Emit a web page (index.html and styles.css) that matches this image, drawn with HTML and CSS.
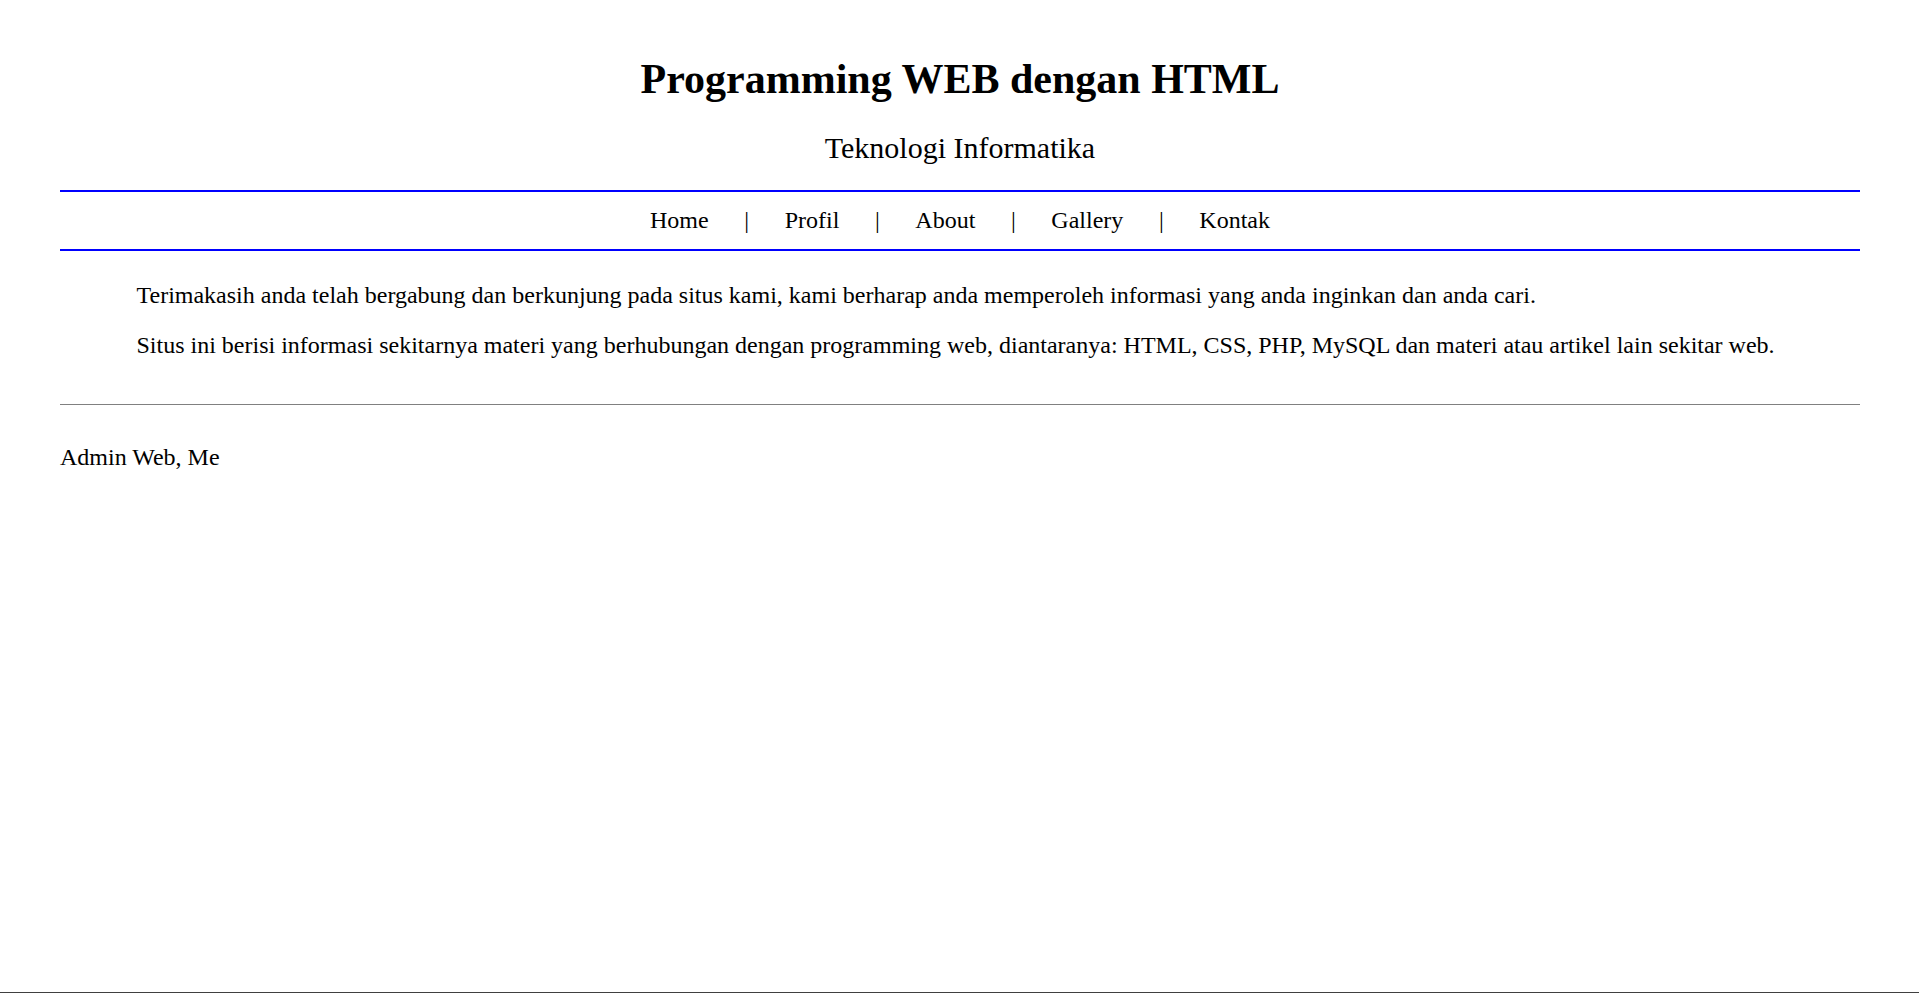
FILE: index.html
```html
<!DOCTYPE html>
<html lang="id">
<head>
<meta charset="utf-8">
<title>Programming WEB dengan HTML</title>
<link rel="stylesheet" href="styles.css">
</head>
<body>
<div class="page">
  <header class="header">
    <h1 class="title">Programming WEB dengan HTML</h1>
    <div class="subtitle">Teknologi Informatika</div>
  </header>
  <nav class="nav">
    <a class="nav-link" href="#">Home</a>
    <span class="sep">|</span>
    <a class="nav-link" href="#">Profil</a>
    <span class="sep">|</span>
    <a class="nav-link" href="#">About</a>
    <span class="sep">|</span>
    <a class="nav-link" href="#">Gallery</a>
    <span class="sep">|</span>
    <a class="nav-link" href="#">Kontak</a>
  </nav>
  <main class="content">
    <p class="para">Terimakasih anda telah bergabung dan berkunjung pada situs kami, kami berharap anda memperoleh informasi yang anda inginkan dan anda cari.</p>
    <p class="para">Situs ini berisi informasi sekitarnya materi yang berhubungan dengan programming web, diantaranya: HTML, CSS, PHP, MySQL dan materi atau artikel lain sekitar web.</p>
  </main>
  <hr class="rule">
  <footer class="footer">Admin Web, Me</footer>
</div>
</body>
</html>
```
FILE: styles.css
```css
html {
  height: 100%;
  box-sizing: border-box;
  border-bottom: 1px solid #404040;
  background: #fff;
}

body {
  margin: 0;
  font-family: "Liberation Serif", "Times New Roman", serif;
  color: #000;
}

.page {
  margin: 0 59px 0 60px;
}

.header {
  padding-top: 55px;
  text-align: center;
}

.title {
  margin: 0;
  font-size: 42px;
  line-height: 48px;
  font-weight: bold;
}

.subtitle {
  margin-top: 28px;
  font-size: 30px;
  line-height: 34px;
}

.nav {
  margin-top: 25px;
  border-top: 2px solid #0000ff;
  border-bottom: 2px solid #0000ff;
  padding: 15px 0;
  display: flex;
  justify-content: center;
  align-items: baseline;
  gap: 35.6px;
  font-size: 24px;
  line-height: 27px;
}

.nav-link {
  color: #000;
  text-decoration: none;
}

.sep {
  color: #000;
}

.content {
  padding: 29.6px 0 0 76.5px;
}

.para {
  margin: 0 0 22.6px;
  font-size: 24px;
  line-height: 28px;
  white-space: nowrap;
}

.para:last-child {
  margin-bottom: 0;
}

.rule {
  margin: 44.8px 0 0;
  border: 0;
  border-top: 1px solid #808080;
  height: 0;
}

.footer {
  margin-top: 38px;
  font-size: 24px;
  line-height: 28px;
}
```
